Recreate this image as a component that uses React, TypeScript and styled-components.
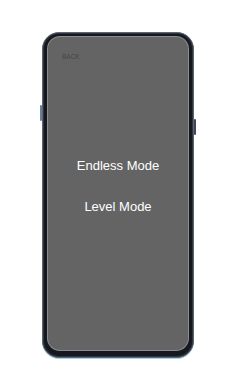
import styled, { createGlobalStyle } from 'styled-components'

const GlobalStyle = createGlobalStyle`
  html, body {
    margin: 0;
    padding: 0;
    background: #fff;
  }
  body {
    font-family: 'Liberation Sans', Arial, sans-serif;
  }
`

const Page = styled.div`
  width: 236px;
  height: 392px;
  display: flex;
  justify-content: center;
  padding-top: 32px;
  box-sizing: border-box;
`

const Phone = styled.div`
  position: relative;
  width: 152px;
  height: 326px;
  box-sizing: border-box;
  padding: 4px 5px 7px 5px;
  border-radius: 17px;
  background: #15181e;
  border: 1px solid #5d6573;
  box-shadow: inset 0 0 0 1px #30353f, 0 1px 0 #a6d6e2;
`

const SideButton = styled.div<{ side: 'left' | 'right'; top: number; length: number }>`
  position: absolute;
  ${(p) => (p.side === 'left' ? 'left: -3px;' : 'right: -3px;')}
  top: ${(p) => p.top}px;
  width: 2px;
  height: ${(p) => p.length}px;
  background: ${(p) => (p.side === 'left' ? '#6e7d92' : '#3d4656')};
  border-radius: 1px;
`

const Screen = styled.div`
  height: 100%;
  border-radius: 12px;
  background: #646464;
  box-shadow: 0 0 0 1px #8a8c90;
  display: flex;
  flex-direction: column;
  padding: 16px 14px 0;
  box-sizing: border-box;
`

const Back = styled.div`
  font-size: 6.5px;
  line-height: 8px;
  color: #464646;
`

const Menu = styled.div`
  margin-top: 97px;
  display: flex;
  flex-direction: column;
  align-items: center;
  gap: 25px;
`

const MenuItem = styled.div`
  font-family: 'Liberation Sans', Arial, sans-serif;
  font-size: 13px;
  line-height: 16px;
  color: #fff;
`

export default function App() {
  return (
    <>
      <GlobalStyle />
      <Page>
        <Phone>
          <SideButton side="left" top={72} length={16} />
          <SideButton side="right" top={86} length={16} />
          <Screen>
            <Back>BACK</Back>
            <Menu>
              <MenuItem>Endless Mode</MenuItem>
              <MenuItem>Level Mode</MenuItem>
            </Menu>
          </Screen>
        </Phone>
      </Page>
    </>
  )
}
